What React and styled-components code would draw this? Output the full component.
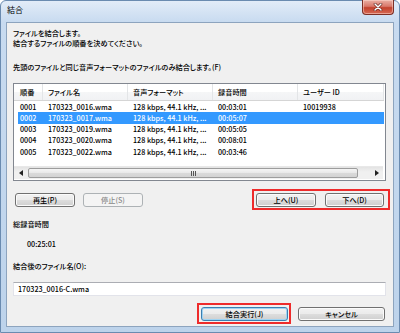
import React from "react";
import styled, { createGlobalStyle } from "styled-components";

const GlobalStyle = createGlobalStyle`
  html, body { margin: 0; padding: 0; background: #ffffff; }
  body { font-family: "Noto Sans CJK JP", "Noto Sans", sans-serif; }
  * { box-sizing: border-box; }
`;

const Window = styled.div`
  width: 400px;
  height: 333px;
  display: flex;
  flex-direction: column;
  border: 1px solid #6a8bb0;
  border-radius: 6px 6px 0 0;
  padding: 0 5px 5px 5px;
  background: linear-gradient(180deg, #e2ecf8 0px, #c8dbf0 21px, #bdd3eb 100%);
`;

const TitleBar = styled.div`
  height: 21px;
  display: flex;
  align-items: flex-start;
  justify-content: space-between;
`;

const Title = styled.span`
  margin: 4px 0 0 1px;
  font-size: 8px;
  line-height: 10px;
  color: #000;
`;

const CloseButton = styled.div`
  width: 32px;
  height: 15px;
  margin-top: -1px;
  display: flex;
  align-items: center;
  justify-content: center;
  border: 1px solid #7c2f25;
  border-top: none;
  border-radius: 0 0 4px 4px;
  background: linear-gradient(180deg, #eab0a4 0%, #d9786a 45%, #c3412c 55%, #d66a55 100%);
  box-shadow: inset 0 0 0 1px rgba(255, 220, 210, 0.5);
`;

const Client = styled.div`
  flex: 1;
  display: flex;
  flex-direction: column;
  background: #f0f0f0;
  border: 1px solid #8da4be;
  padding: 5px 7px 0 6px;
  font-size: 7.2px;
  font-weight: 500;
  font-feature-settings: "palt";
  color: #000;
`;

const TextLine = styled.div`
  line-height: 10px;
  height: 10px;
  white-space: nowrap;
  margin-top: ${(p) => p.$mt || 0}px;
  padding-left: ${(p) => p.$indent || 0}px;
`;

const ListBox = styled.div`
  margin-top: 11px;
  height: 98px;
  border: 1px solid #828790;
  background: #ffffff;
  display: flex;
  flex-direction: column;
`;

const columns = "29px 85px 85px 85px 1fr";
const rowColumns = "25px 85px 85px 85px 1fr";

const Header = styled.div`
  height: 17px;
  display: grid;
  grid-template-columns: ${columns};
  margin-right: 1px;
  background: linear-gradient(180deg, #ffffff 0%, #ffffff 50%, #f5f6f7 51%, #f1f2f4 100%);
  border-bottom: 1px solid #d5d5d5;
`;

const HeaderCell = styled.div`
  display: flex;
  align-items: center;
  padding-left: ${(p) => p.$pad}px;
  border-right: 1px solid #e3e5e7;
  white-space: nowrap;
  overflow: hidden;
`;

const Row = styled.div`
  height: 11.25px;
  display: grid;
  grid-template-columns: ${rowColumns};
  margin: 0 1px 0 4px;
  background: ${(p) => (p.$selected ? "#3399ff" : "transparent")};
  color: ${(p) => (p.$selected ? "#ffffff" : "#000000")};
`;

const Cell = styled.div`
  display: flex;
  align-items: center;
  padding-left: ${(p) => p.$pad}px;
  white-space: nowrap;
  overflow: hidden;
`;

const Spacer = styled.div`
  flex: 1;
`;

const HScroll = styled.div`
  height: 13px;
  margin: 0 2px 1px 0;
  display: flex;
  background: linear-gradient(180deg, #e3e3e3 0%, #f0f0f0 40%, #f0f0f0 100%);
  border-top: 1px solid #e8e8e8;
`;

const ArrowButton = styled.div`
  width: 14px;
  display: flex;
  align-items: center;
  justify-content: center;
`;

const Thumb = styled.div`
  flex: 1;
  margin: 1px 0;
  border: 1px solid #9d9d9d;
  border-radius: 2px;
  background: linear-gradient(180deg, #f5f5f5 0%, #e9e9e9 45%, #d9d9d9 55%, #d3d3d3 100%);
  display: flex;
  align-items: center;
  justify-content: center;
`;

const Grip = styled.div`
  width: 5px;
  height: 5px;
  background: repeating-linear-gradient(90deg, #555 0px, #555 1px, transparent 1px, transparent 2px);
`;

const TrackEnd = styled.div`
  width: 25px;
  display: flex;
  align-items: center;
  justify-content: flex-end;
  padding-right: 4px;
`;

const ButtonRow = styled.div`
  display: flex;
  align-items: center;
  justify-content: ${(p) => p.$justify || "space-between"};
  margin-top: ${(p) => p.$mt}px;
  gap: ${(p) => p.$gap || 0}px;
`;

const Group = styled.div`
  display: flex;
  align-items: center;
  gap: ${(p) => p.$gap || 0}px;
  margin-left: ${(p) => p.$ml || 0}px;
`;

const Highlight = styled.div`
  display: flex;
  align-items: center;
  gap: ${(p) => p.$gap || 0}px;
  border: 2px solid #ee2b2b;
  padding: ${(p) => p.$pad};
  margin-right: ${(p) => p.$mr || 0}px;
`;

const Button = styled.div`
  width: ${(p) => p.$w}px;
  height: 14px;
  display: flex;
  align-items: center;
  justify-content: center;
  border-radius: 3px;
  white-space: nowrap;
  margin-right: ${(p) => p.$mr || 0}px;
  border: 1px solid ${(p) => (p.$disabled ? "#adb2b5" : p.$default ? "#3c7fb1" : "#707070")};
  color: ${(p) => (p.$disabled ? "#8a8a8a" : "#000")};
  background: ${(p) =>
    p.$disabled
      ? "#f4f4f4"
      : "linear-gradient(180deg, #f2f2f2 0%, #ebebeb 50%, #dddddd 51%, #cfcfcf 100%)"};
  box-shadow: inset 0 0 0 1px ${(p) => (p.$default ? "#9fd3f2" : p.$disabled ? "#f4f4f4" : "#fbfbfb")};
`;

const TextInput = styled.div`
  margin-top: 11px;
  height: 14px;
  display: flex;
  align-items: center;
  padding-left: 4px;
  background: #ffffff;
  border: 1px solid #e2e3ea;
  border-top-color: #abadb3;
  white-space: nowrap;
`;

const rows = [
  ["0001", "170323_0016.wma", "128 kbps, 44.1 kHz, ...", "00:03:01", "10019938"],
  ["0002", "170323_0017.wma", "128 kbps, 44.1 kHz, ...", "00:05:07", ""],
  ["0003", "170323_0019.wma", "128 kbps, 44.1 kHz, ...", "00:05:05", ""],
  ["0004", "170323_0020.wma", "128 kbps, 44.1 kHz, ...", "00:08:01", ""],
  ["0005", "170323_0022.wma", "128 kbps, 44.1 kHz, ...", "00:03:46", ""],
];

const headers = ["順番", "ファイル名", "音声フォーマット", "録音時間", "ユーザー ID"];

function CloseGlyph() {
  return (
    <svg width="10" height="8" viewBox="0 0 10 8">
      <path d="M2 1 L8 7 M8 1 L2 7" stroke="#5a1a12" strokeWidth="2.6" strokeLinecap="round" />
      <path d="M2 1 L8 7 M8 1 L2 7" stroke="#ffffff" strokeWidth="1.5" strokeLinecap="round" />
    </svg>
  );
}

function Arrow({ dir }) {
  return (
    <svg width="4" height="6" viewBox="0 0 4 6">
      {dir === "left" ? <path d="M4 0 L0 3 L4 6 Z" fill="#222" /> : <path d="M0 0 L4 3 L0 6 Z" fill="#222" />}
    </svg>
  );
}

export default function App() {
  return (
    <>
      <GlobalStyle />
      <Window>
        <TitleBar>
          <Title>結合</Title>
          <CloseButton>
            <CloseGlyph />
          </CloseButton>
        </TitleBar>
        <Client>
          <TextLine>ファイルを結合します。</TextLine>
          <TextLine>結合するファイルの順番を決めてください。</TextLine>
          <TextLine $mt={14}>先頭のファイルと同じ音声フォーマットのファイルのみ結合します。(F)</TextLine>
          <ListBox>
            <Header>
              {headers.map((h, i) => (
                <HeaderCell key={h} $pad={i === 0 ? 6 : 5}>
                  {h}
                </HeaderCell>
              ))}
            </Header>
            {rows.map((r, idx) => (
              <Row key={r[0]} $selected={idx === 1}>
                {r.map((c, i) => (
                  <Cell key={i} $pad={i === 0 ? 2 : 5}>
                    {c}
                  </Cell>
                ))}
              </Row>
            ))}
            <Spacer />
            <HScroll>
              <ArrowButton>
                <Arrow dir="left" />
              </ArrowButton>
              <Thumb>
                <Grip />
              </Thumb>
              <TrackEnd>
                <Arrow dir="right" />
              </TrackEnd>
            </HScroll>
          </ListBox>
          <ButtonRow $mt={8}>
            <Group $gap={8} $ml={2}>
              <Button $w={60}>再生(P)</Button>
              <Button $w={60} $disabled>
                停止(S)
              </Button>
            </Group>
            <Highlight $gap={9} $pad="2px 4px 1px 2px" $mr={-4}>
              <Button $w={60}>上へ(U)</Button>
              <Button $w={59}>下へ(D)</Button>
            </Highlight>
          </ButtonRow>
          <TextLine $mt={9}>総録音時間</TextLine>
          <TextLine $mt={10} $indent={14}>
            00:25:01
          </TextLine>
          <TextLine $mt={12}>結合後のファイル名(O):</TextLine>
          <TextInput>170323_0016-C.wma</TextInput>
          <ButtonRow $mt={7} $justify="flex-end" $gap={7}>
            <Highlight $pad="2px 1px 1px 2px">
              <Button $w={87} $default>
                結合実行(J)
              </Button>
            </Highlight>
            <Button $w={87} $mr={1}>
              キャンセル
            </Button>
          </ButtonRow>
        </Client>
      </Window>
    </>
  );
}
